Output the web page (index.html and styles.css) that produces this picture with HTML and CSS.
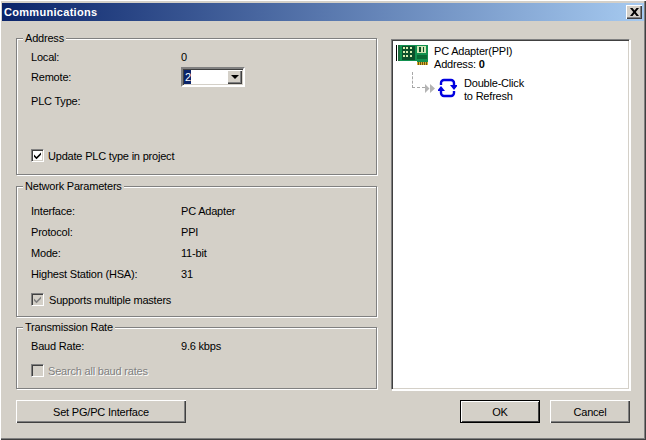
FILE: index.html
```html
<!DOCTYPE html>
<html lang="en">
<head>
<meta charset="utf-8">
<title>Communications</title>
<link rel="stylesheet" href="styles.css">
</head>
<body>
<div class="window">
  <header class="titlebar">
    <span class="title">Communications</span>
    <button class="close" aria-label="Close">
      <svg width="9" height="8" viewBox="0 0 9 8"><path d="M0 0h2.500l2 2.500 2-2.500H9L5.800 4 9 8H6.500l-2-2.500-2 2.500H0l3.200-4z" fill="#000"/></svg>
    </button>
  </header>
  <main class="content">
    <div class="left">
      <section class="group group-address">
        <span class="legend">Address</span>
        <div class="row row-20"><span class="label">Local:</span><span>0</span></div>
        <div class="row row-20">
          <span class="label">Remote:</span>
          <div class="combo">
            <span class="combo-value"><span class="selected">2</span></span>
            <span class="combo-btn"><i class="arrow"></i></span>
          </div>
        </div>
        <div class="row row-20 plc"><span class="label">PLC Type:</span></div>
        <label class="check check-update">
          <span class="box">
            <svg width="9" height="9" viewBox="0 0 9 9"><path d="M1 3.500l2.500 2.500L8 1.500v2.200L3.500 8.200 1 5.700z" fill="#000"/></svg>
          </span>
          Update PLC type in project
        </label>
      </section>
      <section class="group group-network">
        <span class="legend">Network Parameters</span>
        <div class="row"><span class="label">Interface:</span><span>PC Adapter</span></div>
        <div class="row"><span class="label">Protocol:</span><span>PPI</span></div>
        <div class="row"><span class="label">Mode:</span><span>11-bit</span></div>
        <div class="row"><span class="label">Highest Station (HSA):</span><span>31</span></div>
        <label class="check check-multi">
          <span class="box box-disabled">
            <svg width="9" height="9" viewBox="0 0 9 9"><path d="M1 3.500l2.500 2.500L8 1.500v2.200L3.500 8.200 1 5.700z" fill="#808080"/></svg>
          </span>
          Supports multiple masters
        </label>
      </section>
      <section class="group group-rate">
        <span class="legend">Transmission Rate</span>
        <div class="row"><span class="label">Baud Rate:</span><span>9.6 kbps</span></div>
        <label class="check check-search disabled">
          <span class="box box-disabled"></span>
          Search all baud rates
        </label>
      </section>
    </div>
    <div class="tree">
      <div class="node">
        <svg class="card" width="33" height="22" viewBox="0 0 33 22">
          <rect x="0" y="1" width="1" height="16" fill="#000"/>
          <rect x="2" y="1" width="2" height="16" fill="#1d6b3c"/>
          <rect x="4" y="1" width="28" height="16" fill="#12914f"/>
          <rect x="21" y="17" width="11" height="1" fill="#12914f"/>
          <rect x="6" y="2" width="13" height="14" fill="#0b4f2a"/>
          <path d="M7 3h2v2H7zM10 3h2v2h-2zM14 3h2v2h-2zM7 7h2v2H7zM10 7h2v2h-2zM14 7h2v2h-2zM7 11h2v2H7zM10 11h2v2h-2zM14 11h2v2h-2z" fill="#d8eeb0"/>
          <path d="M21 2h9v7h-9z" fill="#cfe6b4"/>
          <path d="M23 3h2v5h-2zM27 3h1v5h-1z" fill="#0b4f2a"/>
          <rect x="21" y="11" width="10" height="4" fill="#0b6a35"/>
          <path d="M21 18h11v3H21z" fill="#d8b030"/>
          <path d="M22.500 18v3M24.500 18v3M26.500 18v3M28.500 18v3M30.500 18v3" stroke="#6b5510" stroke-width="1"/>
        </svg>
        <div class="node-text">PC Adapter(PPI)<br>Address: <b>0</b></div>
      </div>
      <div class="node child">
        <span class="connector"></span>
        <svg class="chevrons" width="10" height="11" viewBox="0 0 10 11">
          <path d="M0 1l4.500 4.500L0 10zM5 1l5 4.500L5 10z" fill="#b4b4b4"/>
        </svg>
        <svg class="refresh" width="19" height="20" viewBox="0 0 19 20" fill="none">
          <path d="M3 7V5a3 3 0 0 1 3-3h7a3 3 0 0 1 3 3v3" stroke="#0000e0" stroke-width="2.400"/>
          <path d="M16 13v2a3 3 0 0 1-3 3H6a3 3 0 0 1-3-3v-3" stroke="#0000e0" stroke-width="2.400"/>
          <path d="M12 7h8l-4 5zM-1 13h8l-4-5z" fill="#0000e0"/>
        </svg>
        <div class="node-text">Double-Click<br>to Refresh</div>
      </div>
    </div>
  </main>
  <footer class="actions">
    <button class="btn btn-wide">Set PG/PC Interface</button>
    <div class="actions-right">
      <button class="btn btn-default">OK</button>
      <button class="btn">Cancel</button>
    </div>
  </footer>
</div>
</body>
</html>
```
FILE: styles.css
```css
* { box-sizing: border-box; }
html, body { margin: 0; padding: 0; }
body {
  width: 646px;
  height: 440px;
  overflow: hidden;
  font-family: "Liberation Sans", Arial, sans-serif;
  font-size: 11px;
  letter-spacing: -0.2px;
  color: #000;
  background: #d4d0c8;
}
.window {
  width: 646px;
  height: 440px;
  padding: 3px 2px 0 2px;
  background: #d4d0c8;
  box-shadow: inset 1px 1px 0 #fff, inset -1px -1px 0 #404040, inset -2px -2px 0 #808080;
}
.titlebar {
  height: 18px;
  display: flex;
  align-items: center;
  justify-content: space-between;
  padding: 0 2px 0 2px;
  background: linear-gradient(90deg, #0a246a, #a6caf0);
}
.title {
  color: #fff;
  font-weight: bold;
  font-size: 11px;
  letter-spacing: 0.3px;
}
.close {
  width: 16px;
  height: 14px;
  padding: 0;
  display: flex;
  align-items: center;
  justify-content: center;
  border: 0;
  background: #d4d0c8;
  box-shadow: inset 1px 1px 0 #fff, inset -1px -1px 0 #404040, inset -2px -2px 0 #808080;
}
.content {
  display: flex;
  padding: 17px 14px 0 14px;
  justify-content: space-between;
}
.left {
  width: 361px;
  display: flex;
  flex-direction: column;
  gap: 10px;
}
.group {
  position: relative;
  border: 1px solid #808080;
  box-shadow: inset 1px 1px 0 #fff, 1px 1px 0 #fff;
  padding-left: 14px;
}
.legend {
  position: absolute;
  left: 6px;
  top: -7px;
  padding: 0 2px;
  line-height: 13px;
  background: #d4d0c8;
}
.group-address { height: 137px; padding-top: 8px; margin-bottom: 1px; }
.group-network { height: 131px; padding-top: 13px; }
.group-rate { height: 62px; padding-top: 7px; }
.row {
  display: flex;
  align-items: center;
  height: 21px;
}
.row-20 { height: 20px; }
.plc { margin-top: 4px; }
.label { width: 150px; flex: none; }
.combo {
  width: 64px;
  height: 20px;
  display: flex;
  align-items: center;
  background: #fff;
  border: 2px solid;
  border-color: #808080 #fff #fff #808080;
  box-shadow: inset 1px 1px 0 #404040, inset -1px -1px 0 #d4d0c8;
  padding: 1px;
}
.combo-value { flex: 1; display: flex; height: 14px; }
.selected { background: #0a246a; color: #fff; padding: 0 1px; line-height: 14px; width: 7px; }
.combo-btn {
  width: 15px;
  height: 14px;
  display: flex;
  align-items: center;
  justify-content: center;
  background: #d4d0c8;
  box-shadow: inset 1px 1px 0 #fff, inset -1px -1px 0 #404040, inset -2px -2px 0 #808080;
}
.arrow {
  width: 0;
  height: 0;
  border-left: 4px solid transparent;
  border-right: 4px solid transparent;
  border-top: 4px solid #000;
}
.check { display: flex; align-items: center; gap: 4px; height: 13px; }
.check-update { margin-top: 38px; }
.check-multi { margin-top: 9px; gap: 5px; }
.check-search { margin-top: 8px; }
.disabled { color: #808080; text-shadow: 1px 1px 0 #fff; }
.box {
  width: 13px;
  height: 13px;
  flex: none;
  display: flex;
  align-items: center;
  justify-content: center;
  background: #fff;
  border: 1px solid;
  border-color: #808080 #fff #fff #808080;
  box-shadow: inset 1px 1px 0 #404040, inset -1px -1px 0 #d4d0c8;
}
.box-disabled { background: #d4d0c8; }
.tree {
  width: 239px;
  height: 351px;
  margin-top: 1px;
  padding: 5px 0 0 4px;
  background: #fff;
  border: 1px solid;
  border-color: #808080 #fff #fff #808080;
  box-shadow: inset 1px 1px 0 #404040, inset -1px -1px 0 #d4d0c8, 1px 1px 0 #fff;
}
.node { display: flex; align-items: flex-start; gap: 5px; }
.node-text { line-height: 13px; }
.card { flex: none; margin-top: -1px; }
.child {
  position: relative;
  margin-top: 6px;
  padding-left: 29px;
  gap: 3px;
  align-items: center;
}
.child .node-text { margin-left: 4px; }
.chevrons, .refresh { flex: none; margin-top: -4px; }
.connector {
  position: absolute;
  left: 16px;
  top: -5px;
  width: 13px;
  height: 16px;
  border-left: 1px dashed #a8a8a8;
  border-bottom: 1px dashed #a8a8a8;
}
.actions {
  display: flex;
  justify-content: space-between;
  padding: 10px 14px 0 14px;
}
.actions-right { display: flex; gap: 10px; }
.btn {
  width: 80px;
  height: 23px;
  padding: 0;
  border: 0;
  font: inherit;
  letter-spacing: inherit;
  color: #000;
  background: #d4d0c8;
  box-shadow: inset 1px 1px 0 #fff, inset -1px -1px 0 #404040, inset -2px -2px 0 #808080;
}
.btn-wide { width: 170px; }
.btn-default {
  box-shadow: inset 0 0 0 1px #000, inset 2px 2px 0 #fff, inset -2px -2px 0 #404040;
}
```
